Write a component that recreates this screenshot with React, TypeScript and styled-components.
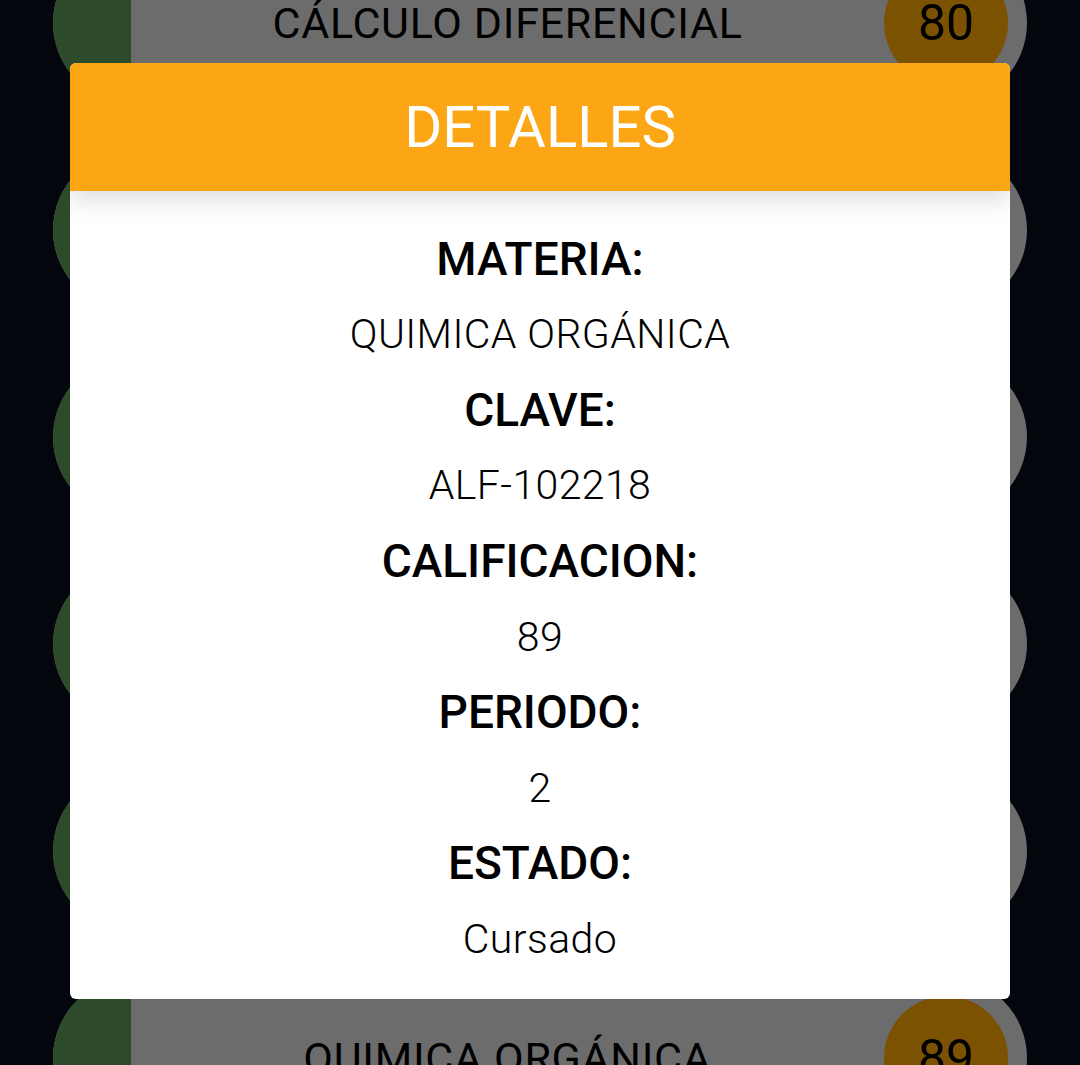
import React from "react";
import styled, { createGlobalStyle } from "styled-components";

const GlobalStyle = createGlobalStyle`
  html, body {
    margin: 0;
    padding: 0;
    background: #060c1a;
    overflow: hidden;
    font-family: Roboto, "Liberation Sans", Arial, sans-serif;
  }
`;

const Screen = styled.div`
  position: relative;
  width: 1080px;
  height: 1065px;
  overflow: hidden;
  background: #060c1a;
`;

const List = styled.div`
  display: flex;
  flex-direction: column;
  gap: 45px;
  padding: 0 53px;
  margin-top: -58px;
`;

const Row = styled.div`
  display: flex;
  align-items: center;
  height: 162px;
  border-radius: 81px;
  background: #d8d8d8;
  overflow: hidden;
`;

const Cap = styled.div`
  align-self: stretch;
  width: 78px;
  background: #5a9456;
`;

const Title = styled.div`
  flex: 1;
  text-align: center;
  font-size: 43px;
  font-weight: 400;
  color: #000;
  letter-spacing: 0.7px;
`;

const Score = styled.div`
  width: 124px;
  height: 124px;
  margin-right: 19px;
  border-radius: 50%;
  background: #f6a204;
  display: flex;
  align-items: center;
  justify-content: center;
  font-size: 50px;
  color: #000;
`;

const Overlay = styled.div`
  position: absolute;
  inset: 0;
  background: rgba(0, 0, 0, 0.5);
  display: flex;
  align-items: center;
  justify-content: center;
`;

const Modal = styled.div`
  width: 940px;
  background: #fff;
  border-radius: 6px;
  overflow: hidden;
  margin-top: -3px;
`;

const Header = styled.div`
  position: relative;
  z-index: 1;
  height: 128px;
  background: #fda615;
  display: flex;
  align-items: center;
  justify-content: center;
  color: #fff;
  font-size: 58px;
  box-shadow: 0 10px 22px rgba(0, 0, 0, 0.13);
`;

const Body = styled.div`
  padding: 31px 0 22px;
  text-align: center;
  color: #000;
`;

const Label = styled.div`
  font-size: 46px;
  font-weight: 500;
  line-height: 75.6px;
`;

const Value = styled.div`
  font-size: 41px;
  font-weight: 300;
  line-height: 75.6px;
  letter-spacing: 0.4px;
`;

const rows = [
  { name: "CÁLCULO DIFERENCIAL", score: 80 },
  { name: "FUNDAMENTOS DE PROGRAMACIÓN", score: 92 },
  { name: "ÁLGEBRA LINEAL", score: 85 },
  { name: "FÍSICA GENERAL", score: 78 },
  { name: "QUÍMICA", score: 90 },
  { name: "QUIMICA ORGÁNICA", score: 89 },
];

const details = [
  { label: "MATERIA:", value: "QUIMICA ORGÁNICA" },
  { label: "CLAVE:", value: "ALF-102218" },
  { label: "CALIFICACION:", value: "89" },
  { label: "PERIODO:", value: "2" },
  { label: "ESTADO:", value: "Cursado" },
];

export default function App() {
  return (
    <>
      <GlobalStyle />
      <Screen>
        <List>
          {rows.map((r) => (
            <Row key={r.name}>
              <Cap />
              <Title>{r.name}</Title>
              <Score>{r.score}</Score>
            </Row>
          ))}
        </List>
        <Overlay>
          <Modal>
            <Header>DETALLES</Header>
            <Body>
              {details.map((d) => (
                <React.Fragment key={d.label}>
                  <Label>{d.label}</Label>
                  <Value>{d.value}</Value>
                </React.Fragment>
              ))}
            </Body>
          </Modal>
        </Overlay>
      </Screen>
    </>
  );
}
